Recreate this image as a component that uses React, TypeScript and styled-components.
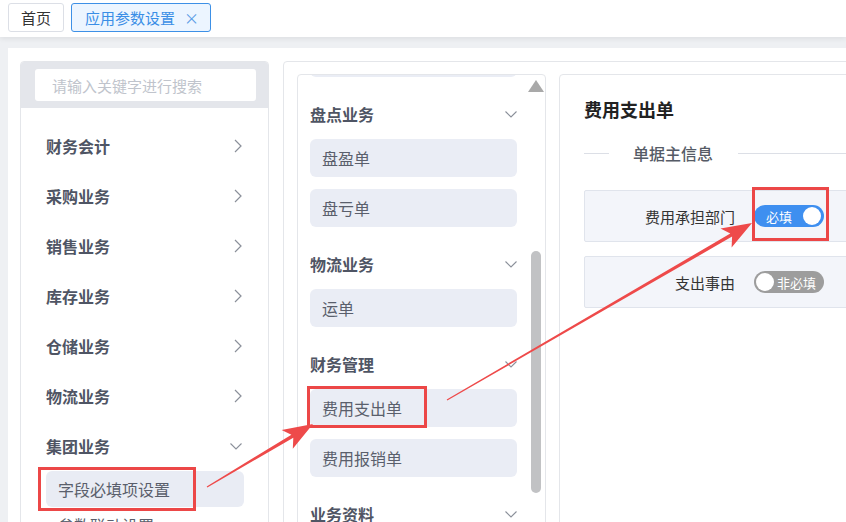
import React from 'react';
import styled, { createGlobalStyle } from 'styled-components';

const GlobalStyle = createGlobalStyle`
  html, body {
    margin: 0;
    padding: 0;
    background: #eef0f3;
    font-family: 'Noto Sans CJK SC', 'Noto Sans', sans-serif;
    overflow: hidden;
  }
  * {
    box-sizing: border-box;
  }
`;

const menuGroups = [
  { name: '财务会计', open: false },
  { name: '采购业务', open: false },
  { name: '销售业务', open: false },
  { name: '库存业务', open: false },
  { name: '仓储业务', open: false },
  { name: '物流业务', open: false },
  { name: '集团业务', open: true },
];

const groupChildren = ['字段必填项设置', '参数联动设置'];

const formSections = [
  { title: '盘点业务', forms: ['盘盈单', '盘亏单'] },
  { title: '物流业务', forms: ['运单'] },
  { title: '财务管理', forms: ['费用支出单', '费用报销单'] },
  { title: '业务资料', forms: [] as string[] },
];

const fields = [
  { label: '费用承担部门', required: true },
  { label: '支出事由', required: false },
];

const ChevronRight = () => (
  <svg width="8" height="14" viewBox="0 0 8 14" fill="none">
    <path d="M1 1 L7 7 L1 13" stroke="#8b909a" strokeWidth="1.2" />
  </svg>
);

const ChevronDown = ({ color = '#8b909a' }: { color?: string }) => (
  <svg width="12" height="7" viewBox="0 0 12 7" fill="none">
    <path d="M0.5 0.5 L6 6 L11.5 0.5" stroke={color} strokeWidth="1.1" />
  </svg>
);

// tapered annotation arrow: thin tail, wide head
const arrowPoints = (sx: number, sy: number, tx: number, ty: number, headLen: number, headHalf: number) => {
  const dx = tx - sx;
  const dy = ty - sy;
  const len = Math.hypot(dx, dy);
  const ux = dx / len;
  const uy = dy / len;
  const nx = -uy;
  const ny = ux;
  const bx = tx - ux * headLen;
  const by = ty - uy * headLen;
  const neck = 1.8;
  const tail = 0.6;
  const notchX = tx - ux * (headLen - 6);
  const notchY = ty - uy * (headLen - 6);
  const pts = [
    [sx + nx * tail, sy + ny * tail],
    [notchX + nx * neck, notchY + ny * neck],
    [bx + nx * headHalf, by + ny * headHalf],
    [tx, ty],
    [bx - nx * headHalf, by - ny * headHalf],
    [notchX - nx * neck, notchY - ny * neck],
    [sx - nx * tail, sy - ny * tail],
  ];
  return pts.map((p) => `${p[0].toFixed(1)},${p[1].toFixed(1)}`).join(' ');
};

export default function App() {
  return (
    <Page>
      <GlobalStyle />
      <TabBar>
        <Tab>首页</Tab>
        <Tab $active>
          应用参数设置
          <CloseMark>×</CloseMark>
        </Tab>
      </TabBar>

      <Body>
        <Card>
          <Sidebar>
            <SearchBar>
              <SearchInput placeholder="请输入关键字进行搜索" />
            </SearchBar>
            <Menu>
              {menuGroups.map((g) => (
                <React.Fragment key={g.name}>
                  <MenuRow>
                    <span>{g.name}</span>
                    {g.open ? <ChevronDown /> : <ChevronRight />}
                  </MenuRow>
                  {g.open &&
                    groupChildren.map((c, i) => (
                      <SubItem key={c} $active={i === 0}>
                        {c}
                      </SubItem>
                    ))}
                </React.Fragment>
              ))}
            </Menu>
          </Sidebar>

          <Workspace>
            <FormList>
              <ListViewport>
                <ListContent>
                  <FormItem>出库单</FormItem>
                  {formSections.map((s) => (
                    <React.Fragment key={s.title}>
                      <SectionHead>
                        <span>{s.title}</span>
                        <ChevronDown />
                      </SectionHead>
                      {s.forms.map((f) => (
                        <FormItem key={f}>{f}</FormItem>
                      ))}
                    </React.Fragment>
                  ))}
                </ListContent>
              </ListViewport>
              <ScrollTrack>
                <ScrollArrow />
                <ScrollThumb />
              </ScrollTrack>
            </FormList>

            <DetailPanel>
              <DetailTitle>费用支出单</DetailTitle>
              <Divider>
                <DividerLine $short />
                <DividerText>单据主信息</DividerText>
                <DividerLine />
              </Divider>
              <FieldList>
                {fields.map((f) => (
                  <FieldRow key={f.label}>
                    <FieldLabel>{f.label}</FieldLabel>
                    <Switch $on={f.required}>
                      <SwitchText $on={f.required}>{f.required ? '必填' : '非必填'}</SwitchText>
                      <SwitchKnob />
                    </Switch>
                  </FieldRow>
                ))}
              </FieldList>
            </DetailPanel>
          </Workspace>
        </Card>
      </Body>

      <Annotations viewBox="0 0 846 522">
        <rect x="39.5" y="468.5" width="155" height="41" />
        <rect x="308.5" y="387.5" width="117" height="39" />
        <rect x="753.5" y="188.5" width="74" height="51" />
        <polygon points={arrowPoints(207, 487, 313, 424, 30, 11)} />
        <polygon points={arrowPoints(447, 400, 752, 223, 30, 11)} />
      </Annotations>
    </Page>
  );
}

const Page = styled.div`
  position: relative;
  width: 846px;
  height: 522px;
  overflow: hidden;
  background: #eef0f3;
`;

const TabBar = styled.div`
  position: relative;
  z-index: 1;
  height: 37px;
  display: flex;
  align-items: flex-start;
  gap: 7px;
  padding: 3px 0 0 8px;
  background: #fff;
  box-shadow: 0 2px 5px rgba(0, 0, 0, 0.07);
`;

const Tab = styled.div<{ $active?: boolean }>`
  height: 29px;
  display: flex;
  align-items: center;
  padding: ${(p) => (p.$active ? '0 11px 0 13px' : '0 12px')};
  border: 1px solid ${(p) => (p.$active ? '#3d90e6' : '#dcdfe6')};
  border-radius: 3px;
  background: ${(p) => (p.$active ? '#ecf5ff' : '#fff')};
  color: ${(p) => (p.$active ? '#3a8ee6' : '#333')};
  font-size: 15px;
  white-space: nowrap;
`;

const CloseMark = styled.span`
  margin-left: 9px;
  font-size: 15px;
  color: #5a9de6;
`;

const Body = styled.div`
  padding: 11px 0 0 8px;
`;

const Card = styled.div`
  width: 1040px;
  height: 560px;
  display: flex;
  gap: 14px;
  padding: 13px 12px;
  background: #fff;
`;

const Sidebar = styled.div`
  width: 249px;
  flex-shrink: 0;
  border: 1px solid #e4e6ea;
  border-radius: 4px;
  overflow: hidden;
`;

const SearchBar = styled.div`
  height: 46px;
  padding: 7px 12px 0 14px;
  background: #e4e6eb;
`;

const SearchInput = styled.input`
  width: 100%;
  height: 32px;
  border: none;
  border-radius: 3px;
  padding: 0 0 0 17px;
  background: #fff;
  font-family: inherit;
  font-size: 15px;
  outline: none;
  &::placeholder {
    color: #c0c4cc;
  }
`;

const Menu = styled.div`
  padding-top: 13px;
`;

const MenuRow = styled.div`
  height: 50px;
  display: flex;
  align-items: center;
  justify-content: space-between;
  padding: 0 26px 0 25px;
  font-size: 16px;
  font-weight: 700;
  color: #4f5564;
`;

const SubItem = styled.div<{ $active?: boolean }>`
  height: 36px;
  margin: 0 24px 0 25px;
  padding-left: 12px;
  display: flex;
  align-items: center;
  border-radius: 6px;
  background: ${(p) => (p.$active ? '#e9ecf4' : 'transparent')};
  font-size: 16px;
  color: #5a5f6c;
`;

const Workspace = styled.div`
  flex: 1;
  display: flex;
  gap: 13px;
  padding: 12px 0 0 13px;
  border: 1px solid #e4e6ea;
  border-radius: 4px;
`;

const FormList = styled.div`
  width: 249px;
  height: 520px;
  flex-shrink: 0;
  display: flex;
  border: 1px solid #e4e6ea;
  border-radius: 4px;
  overflow: hidden;
`;

const ListViewport = styled.div`
  flex: 1;
  overflow: hidden;
  padding-left: 12px;
`;

const ListContent = styled.div`
  width: 207px;
  margin-top: -36px;
`;

const SectionHead = styled.div`
  height: 50px;
  display: flex;
  align-items: center;
  justify-content: space-between;
  font-size: 16px;
  font-weight: 700;
  color: #4f5564;
`;

const FormItem = styled.div`
  height: 38px;
  margin-bottom: 12px;
  padding-left: 12px;
  display: flex;
  align-items: center;
  border-radius: 6px;
  background: #eaedf5;
  font-size: 16px;
  color: #5a5f6c;
`;

const ScrollTrack = styled.div`
  width: 16px;
  margin-right: 1px;
  display: flex;
  flex-direction: column;
  align-items: center;
  padding-top: 5px;
`;

const ScrollArrow = styled.div`
  width: 0;
  height: 0;
  border-left: 8px solid transparent;
  border-right: 8px solid transparent;
  border-bottom: 12px solid #a9a9a9;
`;

const ScrollThumb = styled.div`
  width: 10px;
  height: 242px;
  margin-top: 159px;
  border-radius: 5px;
  background: #c1c2c4;
`;

const DetailPanel = styled.div`
  flex: 1;
  min-width: 400px;
  height: 520px;
  padding: 22px 0 0 24px;
  border: 1px solid #e4e6ea;
  border-radius: 4px;
`;

const DetailTitle = styled.div`
  height: 24px;
  line-height: 24px;
  font-size: 18px;
  font-weight: 700;
  color: #222;
`;

const Divider = styled.div`
  height: 22px;
  margin-top: 21px;
  display: flex;
  align-items: center;
`;

const DividerLine = styled.div<{ $short?: boolean }>`
  height: 1px;
  background: #dcdfe6;
  ${(p) => (p.$short ? 'width: 25px;' : 'flex: 1;')}
`;

const DividerText = styled.div`
  padding: 0 25px 0 24px;
  font-size: 16px;
  font-weight: 500;
  color: #555b66;
`;

const FieldList = styled.div`
  margin-top: 26px;
  display: flex;
  flex-direction: column;
  gap: 14px;
`;

const FieldRow = styled.div`
  height: 52px;
  display: flex;
  align-items: center;
  gap: 19px;
  border: 1px solid #e0e4ec;
  border-radius: 2px;
  background: #f3f5fa;
`;

const FieldLabel = styled.div`
  width: 150px;
  text-align: right;
  font-size: 15px;
  color: #333;
`;

const Switch = styled.div<{ $on: boolean }>`
  width: 70px;
  height: 22px;
  display: flex;
  flex-direction: ${(p) => (p.$on ? 'row' : 'row-reverse')};
  align-items: center;
  padding: 0 3px 0 2px;
  border-radius: 11px;
  background: ${(p) => (p.$on ? '#3e8ff0' : '#9d9d9d')};
`;

const SwitchText = styled.span<{ $on: boolean }>`
  flex: 1;
  padding: ${(p) => (p.$on ? '0 0 0 10px' : '0 0 0 3px')};
  font-size: 13px;
  color: #fff;
  white-space: nowrap;
`;

const SwitchKnob = styled.span`
  width: 18px;
  height: 18px;
  border-radius: 50%;
  background: #fff;
`;

const Annotations = styled.svg`
  position: absolute;
  left: 0;
  top: 0;
  width: 846px;
  height: 522px;
  pointer-events: none;
  z-index: 2;

  rect {
    fill: none;
    stroke: #ec4747;
    stroke-width: 3;
  }
  polygon {
    fill: #ee4a4a;
  }
`;
